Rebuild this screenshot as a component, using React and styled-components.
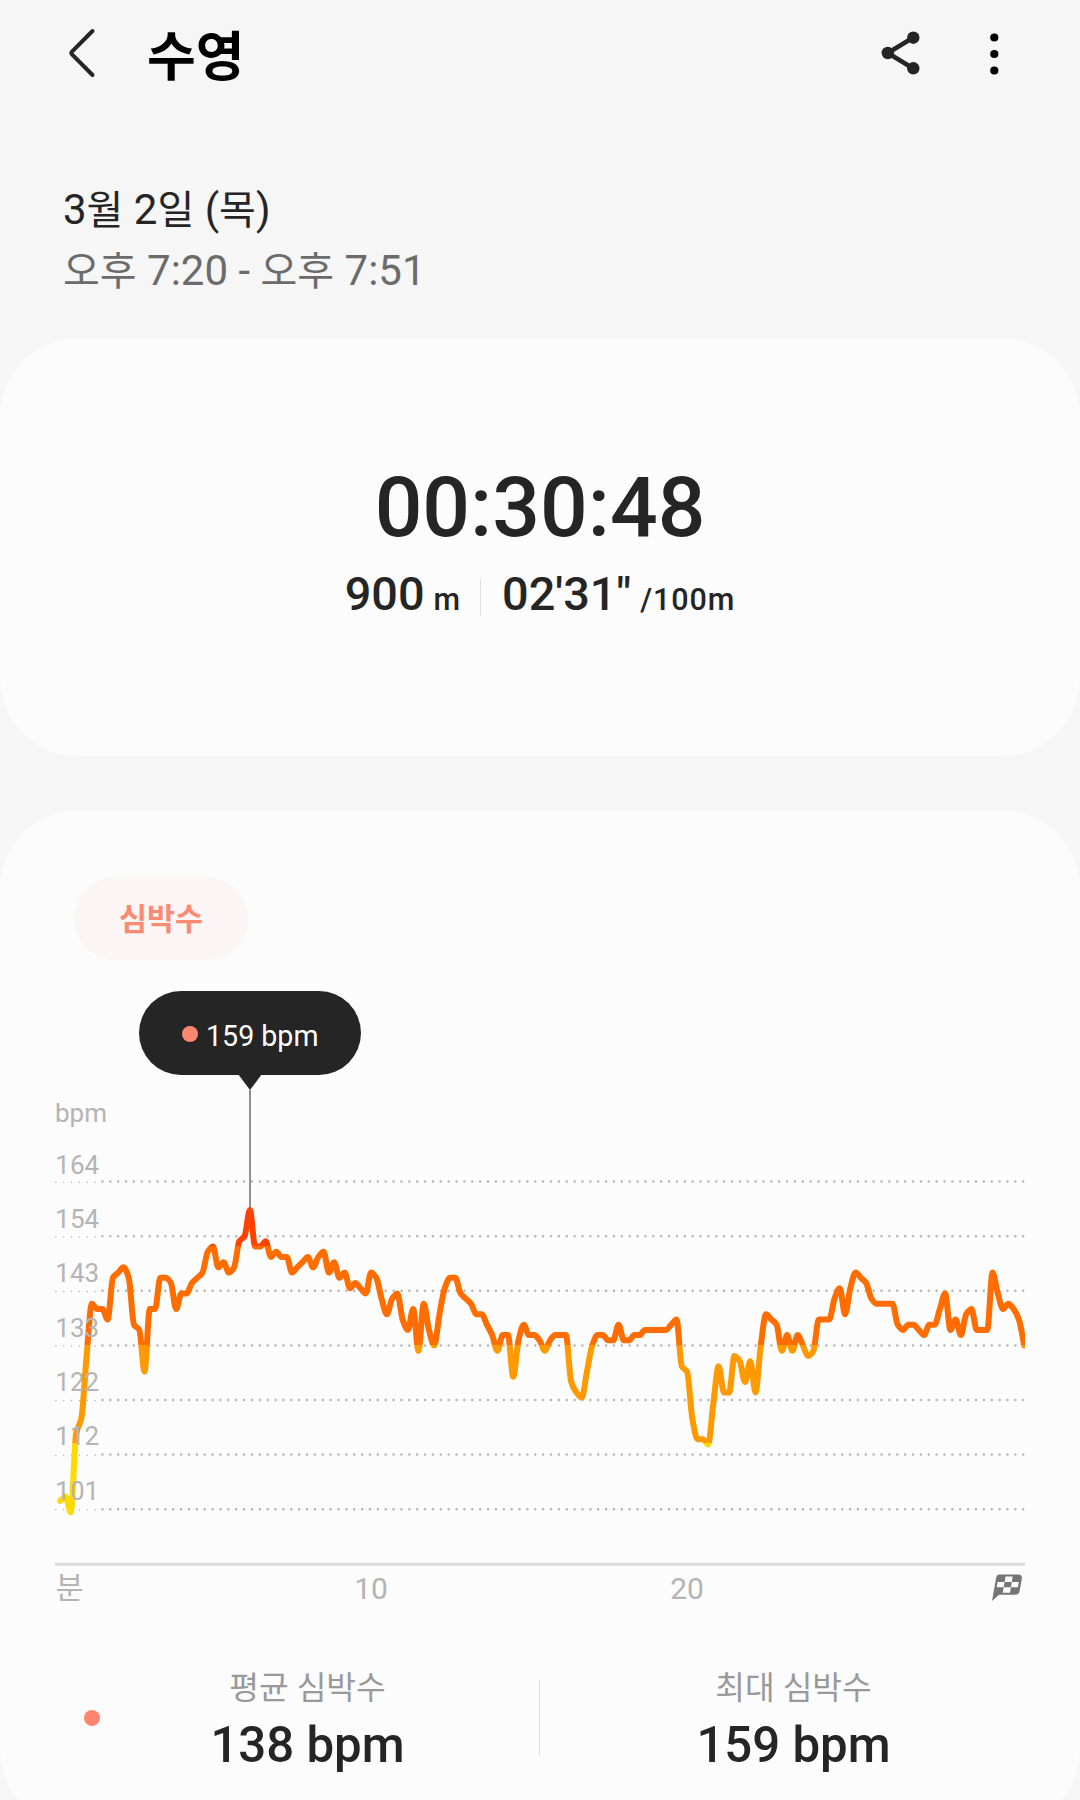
import React from "react";
import styled, { createGlobalStyle } from "styled-components";

const GlobalStyle = createGlobalStyle`
  * {
    box-sizing: border-box;
  }

  body {
    margin: 0;
    background: #f6f6f6;
    font-family: Roboto, "Noto Sans CJK KR", sans-serif;
    color: #252525;
  }
`;

const Page = styled.main`
  width: 1080px;
  height: 1800px;
  overflow: hidden;
`;

const Header = styled.header`
  display: flex;
  align-items: center;
  height: 110px;
  padding: 0 76px 0 68px;
`;

const BackIcon = styled.svg`
  width: 30px;
  height: 52px;
  margin-bottom: 4px;
`;

const Title = styled.h1`
  flex: 1;
  margin: 6px 0 0 49px;
  font-size: 53px;
  font-weight: 700;
  line-height: 80px;
  color: #000;
`;

const ShareIcon = styled.svg`
  width: 40px;
  height: 44px;
  margin: 0 65px 5px 0;
`;

const MoreIcon = styled.svg`
  width: 16px;
  height: 44px;
  margin: 0 2px 3px 0;
`;

const DateBlock = styled.section`
  padding: 70px 63px 0;
  height: 228px;
`;

const DateLine = styled.p`
  margin: 0;
  font-size: 42px;
  line-height: 60px;
  color: ${(p) => (p.$muted ? "#6b6b6b" : "#252525")};
`;

const Ko = styled.span`
  font-size: 0.953em;
`;

const Card = styled.section`
  background: #fcfcfc;
  border-radius: 78px;
`;

const TimeCard = styled(Card)`
  height: 418px;
  padding-top: 120px;
  display: flex;
  flex-direction: column;
  align-items: center;
`;

const Duration = styled.div`
  font-size: 84px;
  font-weight: 500;
  line-height: 100px;
`;

const Metrics = styled.div`
  display: flex;
  align-items: center;
  margin-top: 6px;
`;

const Metric = styled.div`
  font-size: 46.8px;
  font-weight: 500;
  line-height: 60px;
`;

const Unit = styled.span`
  margin-left: 9px;
  font-size: 30.5px;
  letter-spacing: ${(p) => p.$spacing || 0}px;
`;

const Divider = styled.div`
  width: 1px;
  height: ${(p) => p.$height}px;
  background: #dedede;
`;

const MetricDivider = styled(Divider)`
  margin: 0 21px 0 20px;
`;

const HeartCard = styled(Card)`
  height: 1018px;
  margin-top: 54px;
  padding-top: 67px;
`;

const Chip = styled.div`
  width: 174px;
  height: 83px;
  margin-left: 74px;
  border-radius: 42px;
  background: #fcf5f5;
  color: #f98b73;
  font-size: 30.5px;
  font-weight: 700;
  line-height: 86px;
  text-align: center;
`;

const Bubble = styled.div`
  position: relative;
  display: flex;
  align-items: center;
  width: 222px;
  height: 84px;
  margin: 31px 0 0 139px;
  padding: 2px 0 0 43px;
  border-radius: 42px;
  background: #252525;
  color: #fff;
  font-size: 28.6px;

  &::after {
    content: "";
    position: absolute;
    left: 99px;
    top: 83px;
    border: 12px solid transparent;
    border-top: 16px solid #252525;
    border-bottom: 0;
  }
`;

const Dot = styled.span`
  width: 16px;
  height: 16px;
  border-radius: 50%;
  background: #ff866e;
`;

const BubbleText = styled.span`
  margin: 3px 0 0 8px;
`;

const Chart = styled.svg`
  display: block;
  width: 970px;
  height: 520px;
  margin: 15px 0 0 55px;
`;

const AxisText = styled.text`
  font-size: ${(p) => p.$size || 26}px;
  fill: #b4b4b4;
`;

const Summary = styled.div`
  display: flex;
  align-items: center;
  margin-top: 56px;
  padding-left: 84px;
`;

const SummaryDot = styled(Dot)`
  margin-bottom: 5px;
`;

const Stat = styled.div`
  width: ${(p) => p.$width}px;
  text-align: center;
`;

const StatLabel = styled.div`
  font-size: 32.3px;
  line-height: 44px;
  color: #999;
`;

const StatValue = styled.div`
  margin-top: 5px;
  font-size: 49.2px;
  font-weight: 500;
  line-height: 60px;
`;

const StatDivider = styled(Divider)`
  margin: 0 0 5px 24px;
`;

// one reading every 10 seconds
const bpm = [
  103.2, 104, 101, 116, 119, 131, 141, 140, 140, 138, 146, 147, 148, 146, 137,
  136, 128, 140, 140, 146, 146, 145, 140, 143, 143, 145, 146, 147, 151, 152,
  148, 149, 147, 148, 153, 154, 159, 152, 152, 153, 150, 151, 150, 150, 147,
  148, 149, 150, 148, 150, 151, 147, 149, 146, 147, 144, 145, 144, 143, 147,
  146, 142, 139, 142, 143, 138, 136, 140, 132, 141, 136, 133, 139, 144, 146,
  146, 143, 142, 141, 139, 139, 137, 135, 132, 135, 135, 127, 134, 137, 135,
  135, 134, 132, 134, 135, 135, 135, 126, 124, 123, 128, 133, 135, 135, 134,
  134, 137, 134, 134, 135, 135, 136, 136, 136, 136, 136, 137, 138, 129, 128,
  119, 115, 115, 114, 122, 129, 124, 124, 131, 130, 126, 130, 124, 133, 139,
  138, 137, 132, 135, 132, 135, 133, 131, 132, 138, 138, 138, 142, 144, 139,
  144, 147, 146, 145, 142, 141, 141, 141, 141, 137, 136, 137, 137, 136, 135,
  137, 137, 140, 143, 136, 138, 135, 139, 140, 136, 136, 136, 147, 143, 140,
  141, 140, 138, 133,
];

const STEP = 5.267;
const gridLabels = [164, 154, 143, 133, 122, 112, 101];
const gridY = (i) => 91.6 + i * 54.6;

// monotone cubic, so the peaks never overshoot the readings
const linePath = (values) => {
  const pts = values.map((v, i) => [STEP * (i + 1), 94 + 5.21 * (164 - v)]);
  const slopes = pts.slice(1).map((p, i) => (p[1] - pts[i][1]) / STEP);
  const tangents = pts.map((_, i) => {
    const a = slopes[i - 1];
    const b = slopes[i];
    if (a === undefined) return b;
    if (b === undefined) return a * 1.2;
    if (a * b <= 0) return 0;
    return (2 * a * b) / (a + b);
  });

  return pts.reduce((d, [x, y], i) => {
    if (i === 0) return `M${x} ${y}`;
    const [px, py] = pts[i - 1];
    const h = STEP / 3;
    return `${d}C${px + h} ${py + tangents[i - 1] * h} ${x - h} ${y - tangents[i] * h} ${x} ${y}`;
  }, "");
};

function HeartRateChart() {
  return (
    <Chart viewBox="0 0 970 520">
      <defs>
        <linearGradient id="zones" gradientUnits="userSpaceOnUse" x1="0" y1="0" x2="0" y2="500">
          <stop offset="0.31" stopColor="#ff4200" />
          <stop offset="0.314" stopColor="#ff6d00" />
          <stop offset="0.509" stopColor="#ff6d00" />
          <stop offset="0.511" stopColor="#ff9900" />
          <stop offset="0.705" stopColor="#ff9900" />
          <stop offset="0.707" stopColor="#ffd900" />
        </linearGradient>
        <clipPath id="plot">
          <rect width="970" height="520" />
        </clipPath>
      </defs>

      {gridLabels.map((label, i) => (
        <g key={label} stroke="#b4b4b4" strokeLinecap="round">
          <path d={`M0.8 ${gridY(i) + 0.6}H46`} strokeWidth="1.5" strokeDasharray="0 7.87" />
          <path d={`M47.4 ${gridY(i)}H970`} strokeWidth="2.5" strokeDasharray="0 7.87" />
        </g>
      ))}

      <path d="M195 0V118" stroke="#858585" strokeWidth="1.8" />
      <path
        d={linePath(bpm)}
        clipPath="url(#plot)"
        fill="none"
        stroke="url(#zones)"
        strokeWidth="6"
        strokeLinecap="round"
        strokeLinejoin="round"
      />

      <AxisText x="0" y="31.7">bpm</AxisText>
      {gridLabels.map((label, i) => (
        <AxisText key={label} x="0.3" y={83.7 + i * 54.35}>{label}</AxisText>
      ))}

      <path d="M0 474.3H970" stroke="#dadada" strokeWidth="3" />
      <AxisText x="0.5" y="508.5" $size="30.5">분</AxisText>
      <AxisText x="316" y="509" $size="30" textAnchor="middle">10</AxisText>
      <AxisText x="632" y="509" $size="30" textAnchor="middle">20</AxisText>

      <g transform="translate(937 484.5)">
        <path
          d="M7.5 0H26Q30.5 0 29.8 4.5L27.6 16.5Q27 20.3 23 20.3H7L0 26.5L4.2 3Q4.8 0 7.5 0Z"
          fill="#757575"
        />
        <path
          d="M13.5 2H20.7L19.8 7.5H12.6ZM5.6 7.5H12.6L11.7 12.7H4.7ZM19.8 7.5H26.8L25.9 12.7H18.9ZM11.7 12.7H18.9L18 18.2H10.8Z"
          fill="#fcfcfc"
        />
      </g>
    </Chart>
  );
}

export default function App() {
  return (
    <Page>
      <GlobalStyle />

      <Header>
        <BackIcon viewBox="0 0 30 52" fill="none" stroke="#252525" strokeWidth="4" strokeLinecap="round" strokeLinejoin="round">
          <path d="M24.5 4L4 24.6Q2.6 26 4 27.4L24.5 48" />
        </BackIcon>
        <Title>수영</Title>
        <ShareIcon viewBox="0 0 40 44" fill="#252525">
          <path d="M32.3 6.5L6.8 22L32.3 37.5" fill="none" stroke="#252525" strokeWidth="4.6" />
          <circle cx="32.3" cy="6.7" r="6.2" />
          <circle cx="6.8" cy="22" r="6.2" />
          <circle cx="32.3" cy="37.3" r="6.2" />
        </ShareIcon>
        <MoreIcon viewBox="0 0 16 44" fill="#000">
          <circle cx="8.3" cy="5.5" r="4.1" />
          <circle cx="8.3" cy="22" r="4.1" />
          <circle cx="8.3" cy="38.5" r="4.1" />
        </MoreIcon>
      </Header>

      <DateBlock>
        <DateLine>
          3<Ko>월</Ko> 2<Ko>일</Ko> (<Ko>목</Ko>)
        </DateLine>
        <DateLine $muted>
          <Ko>오후</Ko> 7:20 - <Ko>오후</Ko> 7:51
        </DateLine>
      </DateBlock>

      <TimeCard>
        <Duration>00:30:48</Duration>
        <Metrics>
          <Metric>
            900<Unit>m</Unit>
          </Metric>
          <MetricDivider $height={37} />
          <Metric>
            02'31"<Unit $spacing={0.9}>/100m</Unit>
          </Metric>
        </Metrics>
      </TimeCard>

      <HeartCard>
        <Chip>심박수</Chip>
        <Bubble>
          <Dot />
          <BubbleText>159 bpm</BubbleText>
        </Bubble>
        <HeartRateChart />
        <Summary>
          <SummaryDot />
          <Stat $width={415}>
            <StatLabel>평균 심박수</StatLabel>
            <StatValue>138 bpm</StatValue>
          </Stat>
          <StatDivider $height={76} />
          <Stat $width={507}>
            <StatLabel>최대 심박수</StatLabel>
            <StatValue>159 bpm</StatValue>
          </Stat>
        </Summary>
      </HeartCard>
    </Page>
  );
}
